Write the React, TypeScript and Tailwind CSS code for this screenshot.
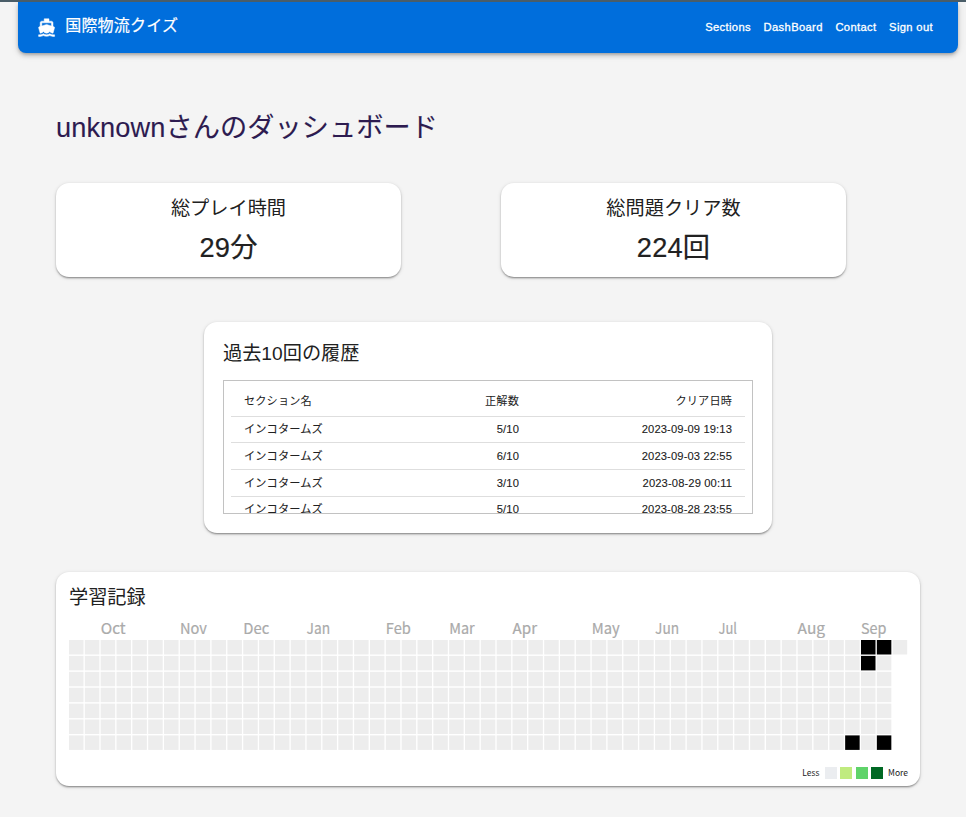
import React from "react";

const CARD =
  "bg-white rounded-[13px] shadow-[0_2px_2px_-1px_rgba(0,0,0,0.26),0_1px_2px_0_rgba(0,0,0,0.2),0_1px_4px_0_rgba(0,0,0,0.12)]";

const NAV = ["Sections", "DashBoard", "Contact", "Sign out"];

const HISTORY = [
  { name: "インコタームズ", score: "5/10", date: "2023-09-09 19:13" },
  { name: "インコタームズ", score: "6/10", date: "2023-09-03 22:55" },
  { name: "インコタームズ", score: "3/10", date: "2023-08-29 00:11" },
  { name: "インコタームズ", score: "5/10", date: "2023-08-28 23:55" },
];

const MONTHS: [string, number, number][] = [
  ["Oct", 2, 25], ["Nov", 7, 27], ["Dec", 11, 26], ["Jan", 15, 23.5],
  ["Feb", 20, 25], ["Mar", 24, 25.5], ["Apr", 28, 24.5], ["May", 33, 28],
  ["Jun", 37, 24], ["Jul", 41, 18.5], ["Aug", 46, 27.5], ["Sep", 50, 25.5],
];

const ACTIVE = new Set(["50-0", "51-0", "50-1", "49-6", "51-6"]);
const PITCH = 15.84;
const ROW_PITCH = 15.9;
const CELL = 14.5;

function BoatIcon() {
  return (
    <svg viewBox="0 0 24 24" className="size-[19.2px]" fill="currentColor" stroke="currentColor" strokeWidth="0.6">
      <path d="M20 21c-1.39 0-2.78-.47-4-1.32-2.44 1.71-5.56 1.71-8 0C6.78 20.53 5.39 21 4 21H2v2h2c1.38 0 2.74-.35 4-.99 2.52 1.29 5.48 1.29 8 0 1.26.65 2.62.99 4 .99h2v-2h-2zM3.95 19H4c1.6 0 3.02-.88 4-2 .98 1.12 2.4 2 4 2s3.02-.88 4-2c.98 1.12 2.4 2 4 2h.05l1.89-6.68c.08-.26.06-.54-.06-.78s-.34-.42-.6-.5L20 10.62V6c0-1.1-.9-2-2-2h-3V1H9v3H6c-1.1 0-2 .9-2 2v4.62l-1.29.42c-.26.08-.48.26-.6.5s-.15.52-.06.78L3.95 19zM6 6h12v3.97L12 8 6 9.97V6z" />
    </svg>
  );
}

function Stat({ label, value }: { label: string; value: string }) {
  return (
    <section className={`${CARD} flex h-[94px] w-[345px] flex-col items-center pt-[13px]`}>
      <h2 className="text-[19.2px] leading-[26px]">{label}</h2>
      <p className="mt-[8px] text-[27.2px] leading-[36px] tracking-[0.2px] [-webkit-text-stroke:0.2px]">{value}</p>
    </section>
  );
}

function Calendar() {
  const cells: React.ReactNode[] = [];
  for (let week = 0; week < 53; week++) {
    for (let day = 0; day < (week === 52 ? 1 : 7); day++) {
      cells.push(
        <rect
          key={`${week}-${day}`}
          x={week * PITCH}
          y={20 + day * ROW_PITCH}
          width={CELL}
          height={CELL}
          fill={ACTIVE.has(`${week}-${day}`) ? "#000" : "#ededed"}
        />
      );
    }
  }
  return (
    <svg width="839" height="131" className="block overflow-visible" fontFamily="'Noto Sans CJK JP', sans-serif">
      {MONTHS.map(([name, week, width]) => (
        <text key={name} x={week * PITCH} y="14" fontSize="15" fill="#aaa" stroke="#aaa" strokeWidth="0.2" textLength={width} lengthAdjust="spacingAndGlyphs">
          {name}
        </text>
      ))}
      {cells}
    </svg>
  );
}

export default function App() {
  return (
    <div className="h-[817px] w-[966px] overflow-hidden border-t-2 border-[#4a5d68] bg-[#f4f4f4] font-['Liberation_Sans','Noto_Sans_CJK_JP',sans-serif] text-[#212121]">
      <header className="ml-[18px] flex h-[51px] w-[940px] items-center rounded-b-[8px] bg-[#006edc] pl-[19px] pr-[25px] text-white shadow-[0_2px_3px_-1px_rgba(0,0,0,0.2),0_3px_4px_0_rgba(0,0,0,0.14),0_1px_8px_0_rgba(0,0,0,0.12)]">
        <BoatIcon />
        <span className="ml-[9px] pb-[3px] text-[16px] leading-[24px] tracking-[0.2px] [-webkit-text-stroke:0.2px]">国際物流クイズ</span>
        <nav className="ml-auto flex gap-[12.6px] text-[11.2px] tracking-[0.36px] [-webkit-text-stroke:0.3px]">
          {NAV.map((item) => (
            <a key={item}>{item}</a>
          ))}
        </nav>
      </header>

      <main className="ml-[56px] w-[864px]">
        <h1 className="mt-[57px] h-[38px] whitespace-nowrap text-[27.2px] leading-[36px] tracking-[0.08px] text-[#2d1b50] [-webkit-text-stroke:0.1px]">
          unknownさんのダッシュボード
        </h1>

        <div className="mt-[35px] flex gap-[100px]">
          <Stat label="総プレイ時間" value="29分" />
          <Stat label="総問題クリア数" value="224回" />
        </div>

        <section className={`${CARD} mx-auto mt-[45px] h-[211px] w-[568px] px-[19px] pt-[18px]`}>
          <h2 className="text-[19.2px] leading-[28px]">過去10回の履歴</h2>
          <div className="mt-[12px] h-[134px] overflow-hidden border border-[#c2c2c2] px-[7px] pt-[7px]">
            <table className="w-full table-fixed border-collapse text-[11.2px] leading-[16px] tracking-[0.12px]">
              <colgroup>
                <col className="w-[130px]" />
                <col className="w-[171px]" />
                <col />
              </colgroup>
              <thead>
                <tr className="h-[28px] border-b border-[#dedede]">
                  <th className="px-[13px] py-0 pb-[1px] text-left font-normal">セクション名</th>
                  <th className="px-[13px] py-0 pb-[1px] text-right font-normal">正解数</th>
                  <th className="px-[13px] py-0 pb-[1px] text-right font-normal">クリア日時</th>
                </tr>
              </thead>
              <tbody className="[-webkit-text-stroke:0.1px]">
                {HISTORY.map((row) => (
                  <tr key={row.date} className="h-[26.8px] border-b border-[#dedede] last:h-[25px]">
                    <td className="px-[13px] py-0">{row.name}</td>
                    <td className="px-[13px] py-0 text-right">{row.score}</td>
                    <td className="px-[13px] py-0 text-right">{row.date}</td>
                  </tr>
                ))}
              </tbody>
            </table>
          </div>
        </section>

        <section className={`${CARD} mt-[39px] h-[214px] pl-[13px] pt-[12px]`}>
          <h2 className="text-[19.2px] leading-[28px]">学習記録</h2>
          <div className="mt-[8px]">
            <Calendar />
          </div>
          <div className="mr-[12px] mt-[16px] flex h-[12px] items-center justify-end font-['Noto_Sans_CJK_JP',sans-serif] text-[8.5px] leading-[12px]">
            <span className="mb-[2px] mr-[5px]">Less</span>
            <div className="flex gap-[3.5px]">
              <i className="size-[12px] bg-[#ebedf0]" />
              <i className="size-[12px] bg-[#c0eb7f]" />
              <i className="size-[12px] bg-[#5fd36a]" />
              <i className="size-[12px] bg-[#006823]" />
            </div>
            <span className="mb-[2px] ml-[5px]">More</span>
          </div>
        </section>
      </main>
    </div>
  );
}
